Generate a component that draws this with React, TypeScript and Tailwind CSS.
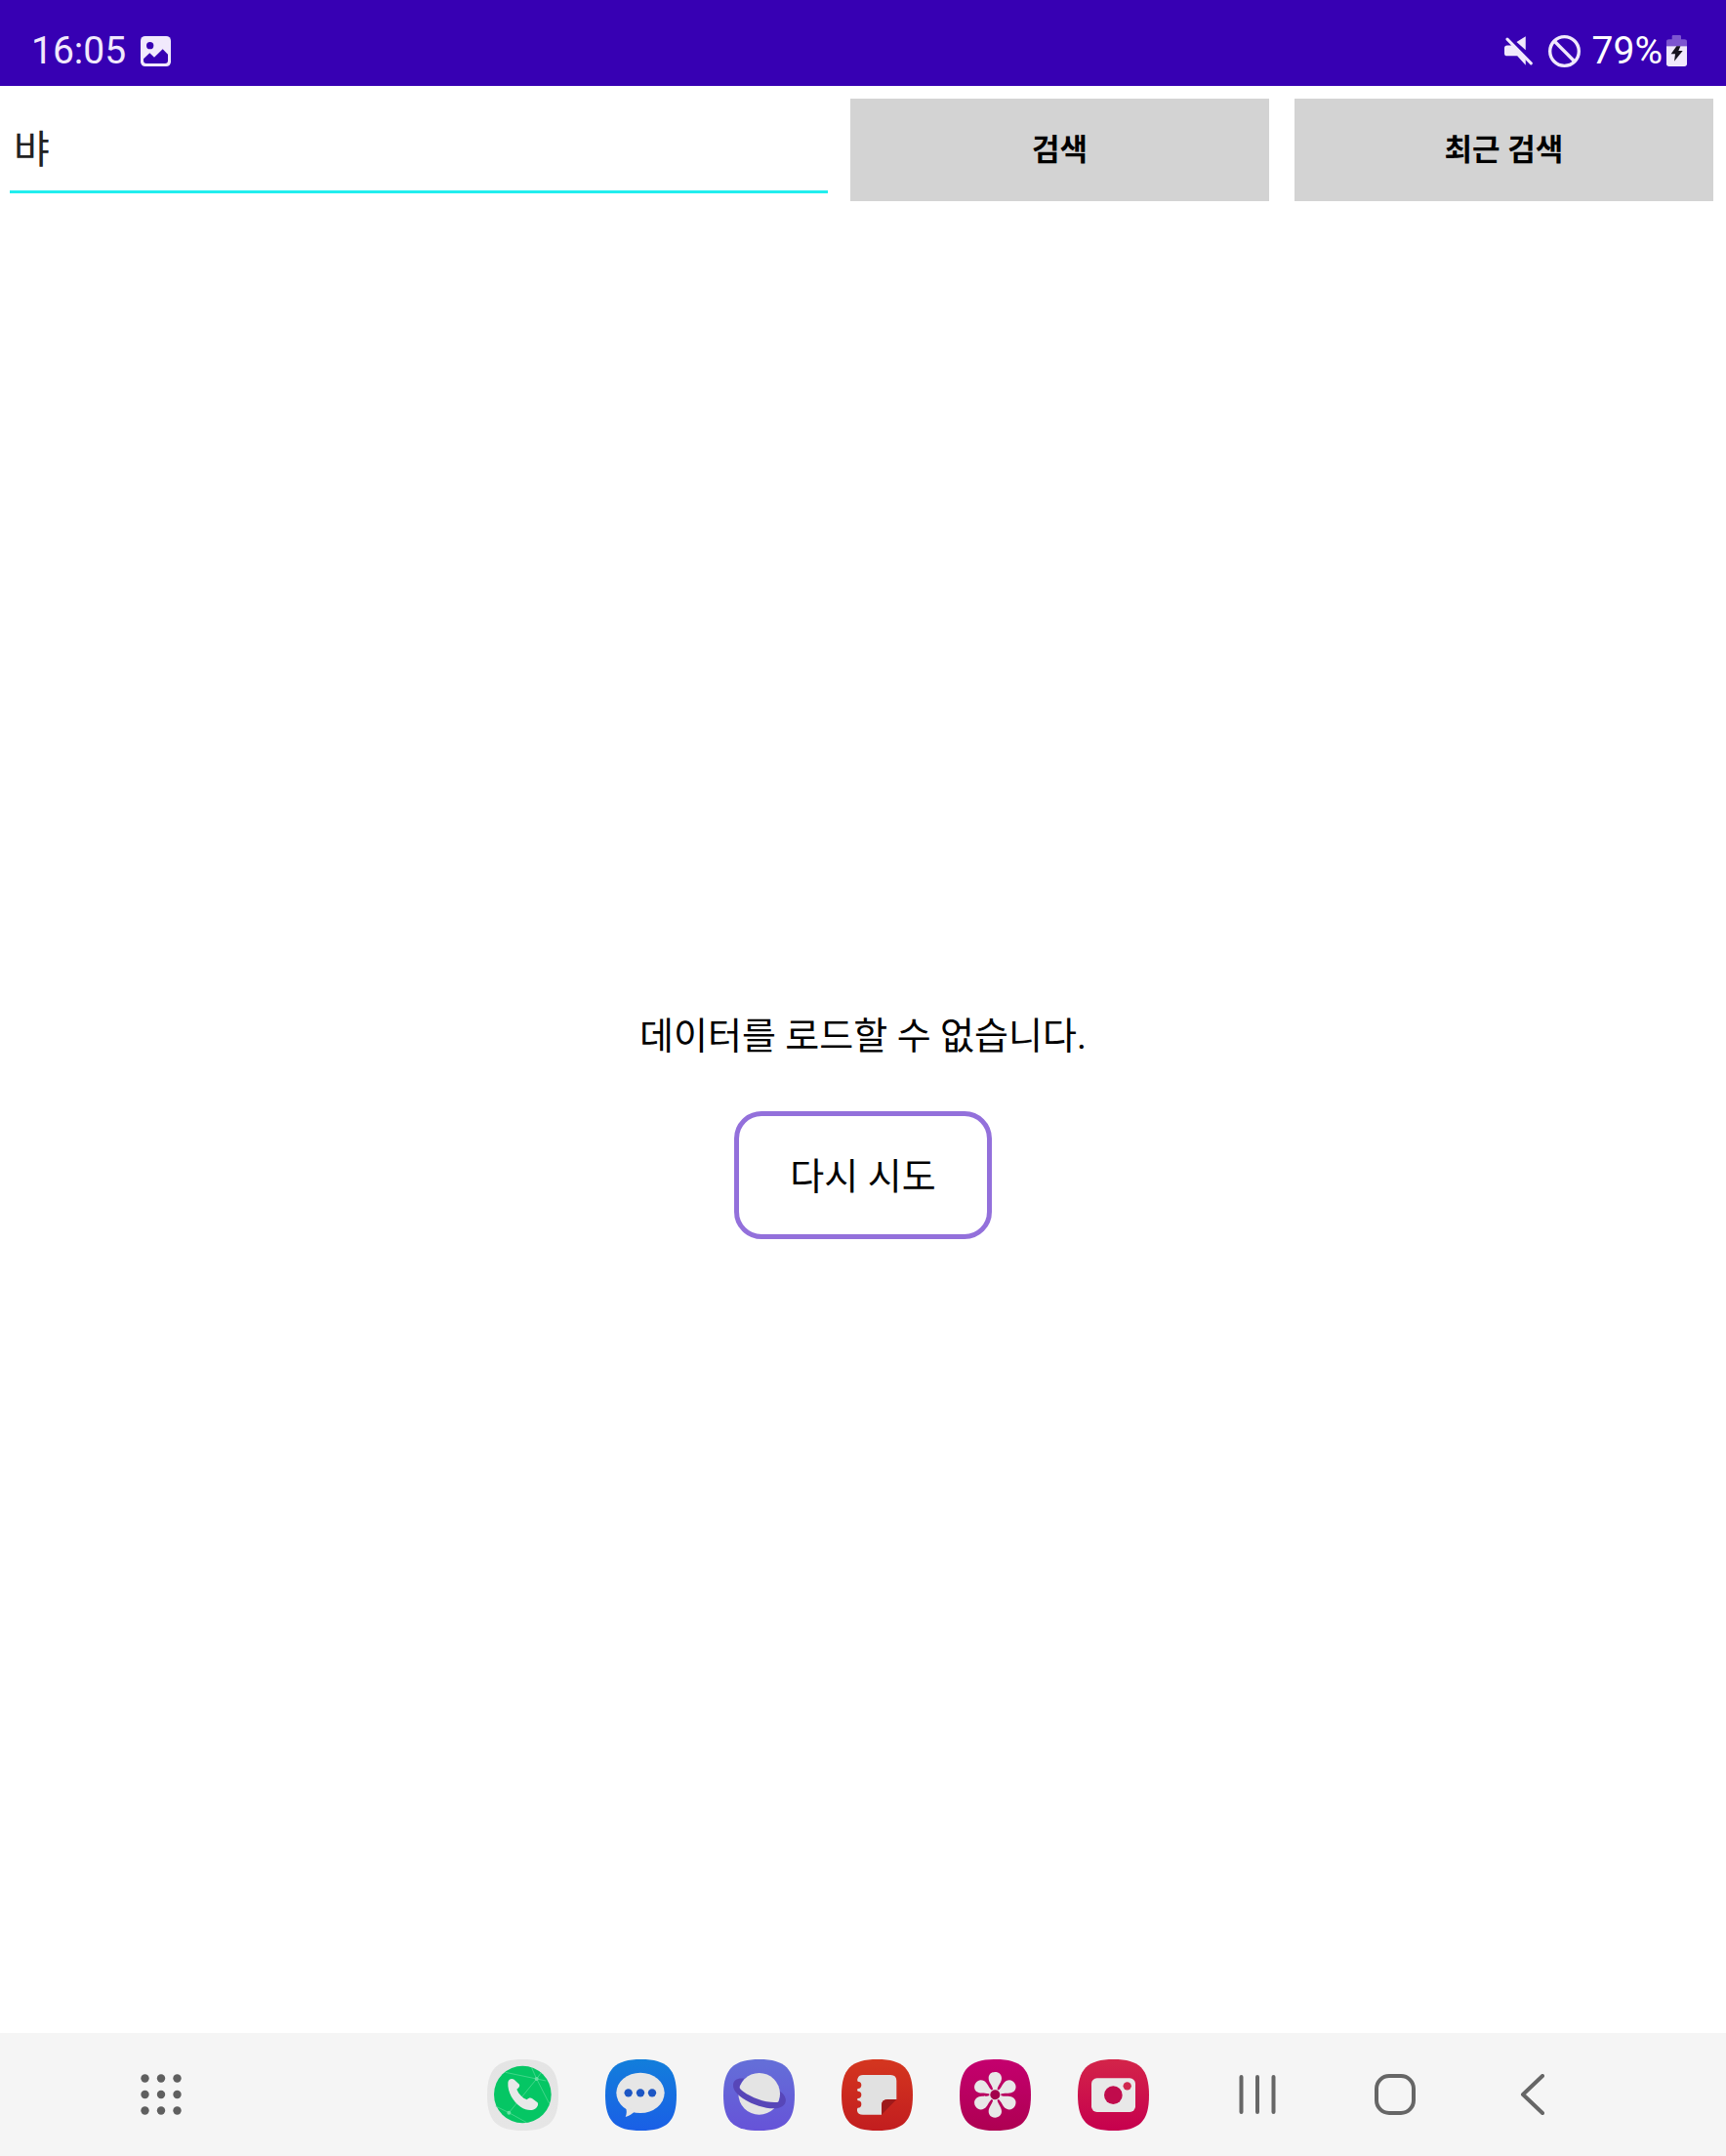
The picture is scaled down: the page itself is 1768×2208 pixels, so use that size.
import React from "react";

const SQUIRCLE = "M110 0C190 0 219 30 219 110C219 190 190 219 110 219C30 219 0 190 0 110C0 30 30 0 110 0Z";
const PETAL = "M109 39C97 39 89 47 89 58C89 72 101 80 103 96H115C117 80 129 72 129 58C129 47 121 39 109 39Z";

function ImageIcon() {
  return (
    <svg viewBox="0 0 93 93" className="size-[31px]" aria-hidden="true">
      <rect width="93" height="93" rx="14" fill="#f1e9fc" />
      <circle cx="29" cy="29" r="11" fill="#3700b3" />
      <path d="M9 70L28 52L42 65L68 40L84 56V75Q84 84 75 84H18Q9 84 9 75Z" fill="#3700b3" />
    </svg>
  );
}

function MuteIcon() {
  return (
    <svg viewBox="0 0 88 90" className="h-[30px] w-[29px]" aria-hidden="true">
      <path d="M9 28H20L28 26L66 66V90L40 61H9Q0 61 0 53V36Q0 28 9 28Z" fill="#f1e9fc" />
      <path d="M66 0V43L38 18Z" fill="#f1e9fc" />
      <path d="M9 9L83 84" stroke="#f1e9fc" strokeWidth="9" strokeLinecap="round" />
    </svg>
  );
}

function BlockIcon() {
  return (
    <svg viewBox="0 0 98 98" className="size-[33px]" fill="none" stroke="#f1e9fc" strokeWidth="10" aria-hidden="true">
      <circle cx="49" cy="49" r="44" />
      <path d="M18 18L80 80" />
    </svg>
  );
}

function BatteryIcon() {
  return (
    <svg viewBox="0 0 63 96" className="h-8 w-[21px]" aria-hidden="true">
      <path d="M0 34V20Q0 13 8 13H17V4Q17 0 21 0H41Q45 0 45 4V13H55Q63 13 63 20V34Z" fill="#7d55d0" />
      <path d="M0 34H63V88Q63 96 55 96H8Q0 96 0 88Z" fill="#f1e9fc" />
      <path d="M31 34H43L37 48H50L24 80L27 58H14Z" fill="#17131f" />
    </svg>
  );
}

function AppIcon({ id, from, to, children }: { id: string; from: string; to: string; children: React.ReactNode }) {
  return (
    <svg viewBox="0 0 219 219" className="size-[73px]" aria-hidden="true">
      <defs>
        <linearGradient id={id} x1="0" y1="0" x2="0" y2="1">
          <stop offset="0" stopColor={from} />
          <stop offset="1" stopColor={to} />
        </linearGradient>
      </defs>
      <path d={SQUIRCLE} fill={`url(#${id})`} />
      {children}
    </svg>
  );
}

const apps = [
  {
    label: "전화",
    icon: (
      <AppIcon id="phone" from="#e4e4e4" to="#e6e6e6">
        <circle cx="109" cy="108" r="88" fill="#05c664" />
        <g stroke="#5fdc9c" strokeWidth="2" fill="none">
          <path d="M56 40L152 60L181 66M136 24L152 60L191 136M166 41L152 60L67 164M26 144L67 164L121 194" />
        </g>
        <circle cx="152" cy="60" r="6" fill="#6adfa3" />
        <circle cx="67" cy="164" r="6" fill="#6adfa3" />
        <path
          d="M64 71C65 62 74 57 83 62L99 77C101 82 98 87 91 92C98 108 108 118 122 124C128 118 134 117 139 121L155 133C158 138 156 144 151 149C140 160 120 157 103 146C80 130 62 100 64 71Z"
          fill="#e9e9e9"
        />
      </AppIcon>
    ),
  },
  {
    label: "메시지",
    icon: (
      <AppIcon id="messages" from="#127edb" to="#1a5fe6">
        <ellipse cx="108" cy="103" rx="74" ry="62" fill="#e6e6e6" />
        <path d="M62 144C67 158 66 168 62 177C74 174 82 168 92 160Z" fill="#e6e6e6" />
        <g fill="#1c56c4">
          <circle cx="71" cy="103" r="12.5" />
          <circle cx="108" cy="103" r="12.5" />
          <circle cx="144" cy="103" r="12.5" />
        </g>
      </AppIcon>
    ),
  },
  {
    label: "인터넷",
    icon: (
      <AppIcon id="internet" from="#646fd8" to="#6653d8">
        <circle cx="110" cy="106" r="64" fill="#e4e4e4" />
        <path
          d="M64 59C44 56 29 64 30 81C31 116 109 151 154 151C184 151 194 136 191 121C189 111 182 104 174 98C175 118 173 127 169 131C129 138 59 106 49 86C51 76 57 66 64 59Z"
          fill="#5746b8"
        />
      </AppIcon>
    ),
  },
  {
    label: "노트",
    icon: (
      <AppIcon id="notes" from="#d4361f" to="#c21d1f">
        <path
          d="M66 48H151Q169 48 169 66V123H142Q123 123 123 142V170H66Q50 170 48 158Q47 152 50 149A11 11 0 0 0 50 127Q46 123 50 120A11 11 0 0 0 50 98Q46 94 50 90A11 11 0 0 0 50 68Q46 66 50 58Q54 48 66 48Z"
          fill="#e1e1e1"
        />
        <path d="M123 170V142Q123 123 142 123H169Z" fill="#9e1a1b" />
      </AppIcon>
    ),
  },
  {
    label: "갤러리",
    icon: (
      <AppIcon id="gallery" from="#c4006e" to="#ae0052">
        <g fill="#e8e8e8">
          <path d={PETAL} />
          <path d={PETAL} transform="rotate(60 109 109)" />
          <path d={PETAL} transform="rotate(120 109 109)" />
          <path d={PETAL} transform="rotate(180 109 109)" />
          <path d={PETAL} transform="rotate(240 109 109)" />
          <path d={PETAL} transform="rotate(300 109 109)" />
          <circle cx="109" cy="109" r="18" />
        </g>
        <circle cx="109" cy="109" r="15" fill="#a3004b" />
      </AppIcon>
    ),
  },
  {
    label: "카메라",
    icon: (
      <AppIcon id="camera" from="#d32449" to="#c6004e">
        <rect x="42" y="58" width="135" height="104" rx="17" fill="#e8e8e8" />
        <circle cx="109" cy="110" r="28" fill="#c00b4c" />
        <circle cx="152" cy="82" r="12.5" fill="#d0274d" />
      </AppIcon>
    ),
  },
];

function AppsGridIcon() {
  return (
    <svg viewBox="0 0 42 42" className="size-[42px]" fill="#5f5f5f" aria-hidden="true">
      {[4.5, 21, 37.5].map((y) => [4.5, 21, 37.5].map((x) => <circle key={`${x}-${y}`} cx={x} cy={y} r="4.2" />))}
    </svg>
  );
}

export default function App() {
  return (
    <div className="flex min-h-screen flex-col bg-white font-['Roboto','Noto_Sans_CJK_KR',sans-serif] text-black">
      <header className="flex h-[88px] items-center justify-between bg-[#3700b3] pt-4 pr-10 pl-8 text-[39px] leading-[40px] text-[#f1e9fc]">
        <div className="flex items-center gap-[15px]">
          <span>16:05</span>
          <ImageIcon />
        </div>
        <div className="flex items-center">
          <MuteIcon />
          <span className="ml-4 flex">
            <BlockIcon />
          </span>
          <span className="ml-3 text-white">79%</span>
          <span className="ml-1 flex">
            <BatteryIcon />
          </span>
        </div>
      </header>

      <form className="flex" onSubmit={(e) => e.preventDefault()}>
        <div className="flex-2 pt-[13px]">
          <div className="mx-[10px]">
            <input
              type="text"
              aria-label="검색어"
              defaultValue="뱌"
              className="h-[97px] w-full border-b-3 border-[#22eeee] bg-transparent px-1 pt-3 pb-2 text-[40px] text-[#222222] outline-none"
            />
          </div>
        </div>
        <button type="submit" className="m-[13px] h-[105px] flex-1 bg-[#d3d3d3] pt-[2px] text-[31px] font-bold">
          검색
        </button>
        <button type="button" className="m-[13px] h-[105px] flex-1 bg-[#d3d3d3] pt-[2px] text-[31px] font-bold">
          최근 검색
        </button>
      </form>

      <main className="flex flex-1 flex-col items-center justify-center gap-[52px] text-[38px] leading-[50px]">
        <p className="pt-1">데이터를 로드할 수 없습니다.</p>
        <button type="button" className="rounded-[28px] border-5 border-[#9370db] px-[52px] pt-[37px] pb-[34px]">
          다시 시도
        </button>
      </main>

      <nav className="flex h-[126px] items-center bg-[#f5f5f5] pr-[177px] pl-36" aria-label="작업 표시줄">
        <button type="button" aria-label="모든 앱">
          <AppsGridIcon />
        </button>
        <div className="ml-auto flex gap-12">
          {apps.map((app) => (
            <button key={app.label} type="button" aria-label={app.label}>
              {app.icon}
            </button>
          ))}
        </div>
        <div className="ml-[90px] flex gap-[99px]">
          <button type="button" aria-label="최근 앱">
            <svg viewBox="0 0 42 42" className="size-[42px]" stroke="#666666" strokeWidth="4" strokeLinecap="round" aria-hidden="true">
              <path d="M4.5 3V39M21 3V39M37.5 3V39" />
            </svg>
          </button>
          <button type="button" aria-label="홈">
            <svg viewBox="0 0 42 42" className="size-[42px]" fill="none" stroke="#666666" strokeWidth="4" aria-hidden="true">
              <rect x="2" y="2" width="38" height="38" rx="13" />
            </svg>
          </button>
          <button type="button" aria-label="뒤로">
            <svg
              viewBox="0 0 42 42"
              className="size-[42px]"
              fill="none"
              stroke="#666666"
              strokeWidth="4"
              strokeLinecap="round"
              strokeLinejoin="round"
              aria-hidden="true"
            >
              <path d="M31 2L11 21L31 40" />
            </svg>
          </button>
        </div>
      </nav>
    </div>
  );
}
